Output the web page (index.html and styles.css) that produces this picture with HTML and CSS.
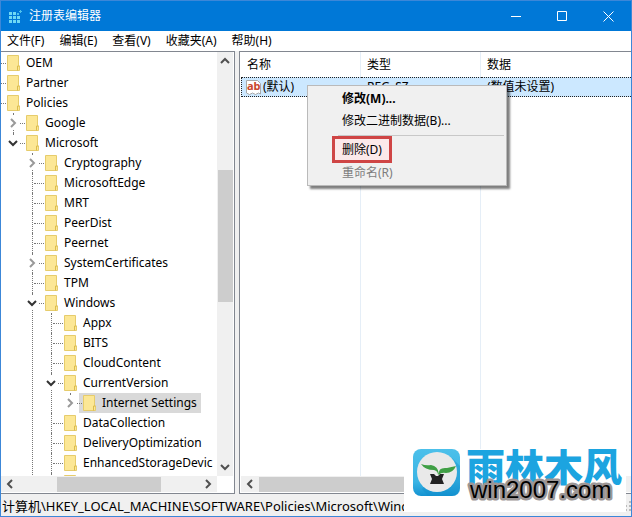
FILE: index.html
```
<!doctype html>
<html lang="zh-CN">
    <head>
        <meta charset="utf-8">
        <meta name="viewport" content="width=device-width, initial-scale=1.0">
        <title>注册表编辑器</title>
        <link rel="stylesheet" href="styles.css">
    </head>
    <body>
        <!-- shared icons -->
        <svg class="defs" width="0" height="0">
            <symbol id="folder" viewBox="0 0 13 16">
                <path d="M.5.5h11v10.500h1v4.500H.5z" fill="#fce795" stroke="#e6cc6c"/>
                <path d="M10.500 15.500v-4.500h2" fill="none" stroke="#dcbc4c"/>
            </symbol>
            <symbol id="chevron" viewBox="0 0 10 10">
                <path d="M3 1l4 4-4 4" fill="none" stroke="currentColor" stroke-width="2"/>
            </symbol>
        </svg>

        <div class="window">
            <header class="titlebar">
                <svg class="app-icon" viewBox="0 0 14 14">
                    <path d="M1 3h3v3H1zM5 3h3v3H5zM1 7h3v3H1zM5 7h3v3H5zM9 7h3v3H9zM1 11h3v3H1zM5 11h3v3H5zM9 11h3v3H9z" fill="#6fd8f4"/>
                    <path d="M9 4h2v2H9zM12 1h1v1h1v1h-1v1h-1V3h-1V2h1z" fill="#4fc0ec"/>
                </svg>
                <h1>注册表编辑器</h1>
                <button type="button" aria-label="最小化"><svg viewBox="0 0 11 11"><path d="M0 5.500h10"/></svg></button>
                <button type="button" aria-label="最大化"><svg viewBox="0 0 11 11"><path d="M.5.5h9v9h-9z"/></svg></button>
                <button type="button" aria-label="关闭"><svg viewBox="0 0 11 11"><path d="M.5.5l10 10M10.500.5l-10 10"/></svg></button>
            </header>

            <nav class="menubar">
                <button type="button">文件(F)</button>
                <button type="button">编辑(E)</button>
                <button type="button">查看(V)</button>
                <button type="button">收藏夹(A)</button>
                <button type="button">帮助(H)</button>
            </nav>

            <main class="panes">
                <section class="pane tree-pane">
                    <div class="tree-view">
                        <ul class="tree">
                            <li><div class="row"><svg class="folder"><use href="#folder"/></svg><span>OEM</span></div></li>
                            <li><div class="row"><svg class="folder"><use href="#folder"/></svg><span>Partner</span></div></li>
                            <li><div class="row"><svg class="folder"><use href="#folder"/></svg><span>Policies</span></div>
                                <ul>
                                    <li><div class="row"><button type="button" class="toggle" aria-label="Google"><svg><use href="#chevron"/></svg></button><svg class="folder"><use href="#folder"/></svg><span>Google</span></div></li>
                                    <li><div class="row"><button type="button" class="toggle open" aria-label="Microsoft"><svg><use href="#chevron"/></svg></button><svg class="folder"><use href="#folder"/></svg><span>Microsoft</span></div>
                                        <ul>
                                            <li><div class="row"><button type="button" class="toggle" aria-label="Cryptography"><svg><use href="#chevron"/></svg></button><svg class="folder"><use href="#folder"/></svg><span>Cryptography</span></div></li>
                                            <li><div class="row"><svg class="folder"><use href="#folder"/></svg><span>MicrosoftEdge</span></div></li>
                                            <li><div class="row"><svg class="folder"><use href="#folder"/></svg><span>MRT</span></div></li>
                                            <li><div class="row"><svg class="folder"><use href="#folder"/></svg><span>PeerDist</span></div></li>
                                            <li><div class="row"><svg class="folder"><use href="#folder"/></svg><span>Peernet</span></div></li>
                                            <li><div class="row"><button type="button" class="toggle" aria-label="SystemCertificates"><svg><use href="#chevron"/></svg></button><svg class="folder"><use href="#folder"/></svg><span>SystemCertificates</span></div></li>
                                            <li><div class="row"><svg class="folder"><use href="#folder"/></svg><span>TPM</span></div></li>
                                            <li class="more"><div class="row"><button type="button" class="toggle open" aria-label="Windows"><svg><use href="#chevron"/></svg></button><svg class="folder"><use href="#folder"/></svg><span>Windows</span></div>
                                                <ul>
                                                    <li><div class="row"><svg class="folder"><use href="#folder"/></svg><span>Appx</span></div></li>
                                                    <li><div class="row"><svg class="folder"><use href="#folder"/></svg><span>BITS</span></div></li>
                                                    <li><div class="row"><svg class="folder"><use href="#folder"/></svg><span>CloudContent</span></div></li>
                                                    <li><div class="row"><button type="button" class="toggle open" aria-label="CurrentVersion"><svg><use href="#chevron"/></svg></button><svg class="folder"><use href="#folder"/></svg><span>CurrentVersion</span></div>
                                                        <ul>
                                                            <li><div class="row selected"><button type="button" class="toggle" aria-label="Internet Settings"><svg><use href="#chevron"/></svg></button><svg class="folder"><use href="#folder"/></svg><span>Internet Settings</span></div></li>
                                                        </ul>
                                                    </li>
                                                    <li><div class="row"><svg class="folder"><use href="#folder"/></svg><span>DataCollection</span></div></li>
                                                    <li><div class="row"><svg class="folder"><use href="#folder"/></svg><span>DeliveryOptimization</span></div></li>
                                                    <li><div class="row"><svg class="folder"><use href="#folder"/></svg><span>EnhancedStorageDevic</span></div></li>
                                                    <li class="more"><div class="row"><svg class="folder"><use href="#folder"/></svg></div></li>
                                                </ul>
                                            </li>
                                        </ul>
                                    </li>
                                </ul>
                            </li>
                        </ul>
                    </div>
                    <div class="scroll-v">
                        <svg class="up"><use href="#chevron"/></svg>
                        <div class="track"><div class="thumb"></div></div>
                        <svg class="down"><use href="#chevron"/></svg>
                    </div>
                    <div class="scroll-h">
                        <svg class="left"><use href="#chevron"/></svg>
                        <div class="track"><div class="thumb"></div></div>
                        <svg><use href="#chevron"/></svg>
                    </div>
                </section>

                <section class="pane list-pane">
                    <div class="list-view">
                        <table>
                            <thead>
                                <tr><th>名称</th><th>类型</th><th>数据</th></tr>
                            </thead>
                            <tbody>
                                <tr>
                                    <td>
                                        <div class="value-name">
                                            <svg viewBox="0 0 15 15">
                                                <path d="M.5.5h11l3 3v10.500l-2-1-3 1.500-3-1.500-3 1.500-3-1.500z" fill="#fff" stroke="#a9a9a9"/>
                                                <text x="1" y="10">ab</text>
                                            </svg>
                                            <span>(默认)</span>
                                        </div>
                                    </td>
                                    <td>REG_SZ</td>
                                    <td>(数值未设置)</td>
                                </tr>
                            </tbody>
                        </table>
                    </div>
                    <div class="scroll-h">
                        <svg class="left"><use href="#chevron"/></svg>
                        <div class="track"><div class="thumb"></div></div>
                        <svg><use href="#chevron"/></svg>
                    </div>

                    <div class="context-menu">
                        <button type="button" class="default">修改(M)...</button>
                        <button type="button">修改二进制数据(B)...</button>
                        <hr>
                        <button type="button" class="marked">删除(D)</button>
                        <button type="button" disabled>重命名(R)</button>
                    </div>
                </section>
            </main>

            <footer class="statusbar">
                <span>计算机\HKEY_LOCAL_MACHINE\SOFTWARE\Policies\Microsoft\Windows\CurrentVersion\Internet Settings</span>
                <svg viewBox="0 0 10 10"><path d="M8 0h2v2H8zM4 4h2v2H4zM8 4h2v2H8zM0 8h2v2H0zM4 8h2v2H4zM8 8h2v2H8z"/></svg>
            </footer>
        </div>

        <div class="watermark">
            <svg viewBox="0 0 222 62">
                <defs>
                    <linearGradient id="tile" x1="0" y1="0" x2="0" y2="1">
                        <stop offset="0" stop-color="#4cc0ea"/>
                        <stop offset=".7" stop-color="#3ab4e4"/>
                        <stop offset="1" stop-color="#1493d2"/>
                    </linearGradient>
                </defs>
                <rect x="9" y="0" width="47" height="47" rx="8" fill="url(#tile)"/>
                <path d="M48 9l8 8v22q0 8-8 8H24L18 40z" fill="#0e8ccb" opacity=".4"/>
                <circle cx="33" cy="23" r="20" fill="#e9e9e9"/>
                <path d="M26 25h4l2 2h2l2-2h4l-2 5 2 5H26l2-5z" fill="#222"/>
                <path d="M34 26q0-4-4-5-9 0-13-6 5 2 10 1 7 1 8 9zM35 25q-1-7 8-6l9-2q-3 7-10 7-5-1-7 2z" fill="#3f9f45"/>
                <text class="brand" x="62" y="32">雨林木风</text>
                <text class="domain" x="66" y="49">win2007.com</text>
            </svg>
        </div>
    </body>
</html>
```
FILE: styles.css
```
html, body {
    margin: 0;
    padding: 0;
}
body {
    font-family: "Noto Sans", "Noto Sans CJK SC", sans-serif;
    font-size: 12px;
    line-height: 20px;
    color: #000;
}
button {
    margin: 0;
    padding: 0;
    border: 0;
    background: none;
    font: inherit;
    color: inherit;
}
.defs {
    position: absolute;
}
.window {
    display: flex;
    flex-direction: column;
    box-sizing: border-box;
    height: 100vh;
    overflow: hidden;
    border: solid 1px #3c87d8;
    background: #f0f0f0;
}


.titlebar {
    display: flex;
    flex: none;
    align-items: center;
    height: 30px;
    padding-left: 7px;
    background: #0078d7;
    color: #fff;
}
.titlebar h1 {
    flex: 1;
    margin: 0 0 0 7px;
    font-size: 12px;
    font-weight: normal;
}
.app-icon {
    width: 14px;
    height: 14px;
}
.titlebar button {
    display: flex;
    align-items: center;
    justify-content: center;
    width: 46px;
    height: 30px;
}
.titlebar button svg {
    width: 11px;
    height: 11px;
    fill: none;
    stroke: #fff;
}

.menubar {
    display: flex;
    flex: none;
    gap: 15px;
    height: 20px;
    padding-left: 6px;
    background: #fff;
}


.panes {
    display: flex;
    flex: 1;
    gap: 4px;
    min-height: 0;
}
.pane {
    display: grid;
    box-sizing: border-box;
    border: solid 1px #828790;
    background: #fff;
}
.tree-pane {
    flex: none;
    width: 234px;
    padding: 0 1px 1px 0;
    border-left: 0;
    grid-template: minmax(0, 1fr) 16px / minmax(0, 1fr) 16px;
}
.list-pane {
    position: relative;
    flex: 1;
    min-width: 0;
    padding: 0 0 1px 1px;
    border-right: 0;
    grid-template: minmax(0, 1fr) 16px / minmax(0, 1fr);
}

.tree-view, .list-view {
    overflow: hidden;
}
.tree, .tree ul {
    margin: 0;
    padding: 0;
    list-style: none;
}
.tree {
    margin-left: -13px;
    padding-top: 1px;
    white-space: nowrap;
}
.tree ul {
    padding-left: 19px;
}
.tree li {
    position: relative;
}
/* dotted guides */
.tree li::before {
    content: "";
    position: absolute;
    top: 0;
    bottom: 0;
    left: 6px;
    border-left: dotted 1px #777;
}
.tree li:last-child:not(.more)::before {
    bottom: auto;
    height: 10px;
}
.row {
    display: flex;
    align-items: center;
    position: relative;
    width: max-content;
    height: 20px;
    padding-left: 19px;
}
.row::before {
    content: "";
    position: absolute;
    top: 10px;
    left: 8px;
    width: 10px;
    border-top: dotted 1px #777;
}
.row span {
    padding: 0 4px 0 6px;
}
.folder {
    width: 13px;
    height: 16px;
}
.toggle {
    position: relative;
    display: flex;
    align-items: center;
    justify-content: center;
    width: 14px;
    height: 14px;
    margin: 0 6px 0 -20px;
    background: #fff;
    color: #999;
}
.toggle svg {
    width: 10px;
    height: 10px;
}
.toggle.open {
    color: #333;
}
.toggle.open svg {
    transform: rotate(90deg);
}
.selected {
    background: linear-gradient(#d9d9d9, #d9d9d9) 15px 0 no-repeat;
}


.scroll-v, .scroll-h {
    display: flex;
    align-items: center;
    justify-content: space-between;
    background: #f0f0f0;
    color: #505050;
}
.scroll-v {
    flex-direction: column;
}
.scroll-v svg, .scroll-h svg {
    flex: none;
    width: 10px;
    height: 10px;
    margin: 4px;
}
.track {
    display: flex;
    flex: 1;
}
.thumb {
    background: #cdcdcd;
}
.scroll-v .track {
    flex-direction: column;
    width: 15px;
}
.scroll-v .thumb {
    height: 34%;
    margin-top: 100px;
}
.scroll-h {
    grid-row: 2;
}
.scroll-h .track {
    height: 15px;
}
.tree-pane .scroll-h .thumb {
    width: 58%;
    margin-left: 38px;
}
.list-pane .scroll-h .thumb {
    width: 70%;
}
.up {
    transform: rotate(-90deg);
}
.down {
    transform: rotate(90deg);
}
.left {
    transform: rotate(180deg);
}


/* column lines run on below the rows */
.list-view {
    background:
        linear-gradient(#e5eef7, #e5eef7) 119px 0 / 1px 100% no-repeat,
        linear-gradient(#e5eef7, #e5eef7) 239px 0 / 1px 100% no-repeat;
}
table {
    width: 100%;
    border-collapse: separate;
    border-spacing: 0;
    table-layout: fixed;
}
th, td {
    padding: 0 0 0 6px;
    border-right: solid 1px #e5eef7;
    text-align: left;
    font-weight: normal;
    white-space: nowrap;
}
th:nth-child(-n+2) {
    width: 113px;
}
th:last-child, td:last-child {
    border-right: 0;
}
th {
    height: 25px;
}
td {
    height: 18px;
    line-height: 18px;
    border-top: dotted 1px #222;
    border-bottom: dotted 1px #222;
    border-right-color: #cce8ff;
    background: #cce8ff;
}
td:first-child {
    padding-left: 5px;
    border-left: dotted 1px #222;
}
.value-name {
    display: flex;
    align-items: center;
    gap: 2px;
}
.value-name svg {
    width: 15px;
    height: 15px;
    margin-left: -1px;
}
.value-name text {
    font-size: 11px;
    font-weight: bold;
    fill: #c8452c;
}

.context-menu {
    position: absolute;
    top: 33px;
    left: 67px;
    display: flex;
    flex-direction: column;
    box-sizing: border-box;
    width: 200px;
    padding: 2px;
    border: solid 1px #bababa;
    background: #f0f0f0;
    box-shadow: 3px 3px 2px rgba(0, 0, 0, .5);
}
.context-menu button {
    height: 22px;
    padding-left: 32px;
    text-align: left;
}
.context-menu .default {
    font-weight: bold;
}
.context-menu button:disabled {
    height: 20px;
    line-height: 18px;
    color: #7d7d7d;
}
.context-menu hr {
    align-self: stretch;
    margin: 3px 0 0 28px;
    border: 0;
    border-top: solid 1px #c8c8c8;
}
.context-menu .marked {
    display: flex;
    align-items: center;
    align-self: flex-start;
    width: 60px;
    height: 27px;
    margin-left: 22px;
    padding: 0 0 0 7px;
    border: solid 3px #cf4545;
    background: #fbe9ea;
}


.statusbar {
    display: flex;
    flex: none;
    align-items: center;
    box-sizing: border-box;
    height: 22px;
    padding: 2px 0 0 1px;
    overflow: hidden;
    font-size: 13px;
    white-space: nowrap;
}
.statusbar span {
    flex: 1;
    min-width: 0;
    overflow: hidden;
}
.statusbar svg {
    width: 10px;
    height: 10px;
    fill: #bbb;
}

.watermark {
    position: absolute;
    right: 6px;
    bottom: 5px;
    width: 222px;
    height: 63px;
    background: #fff;
}
.watermark svg {
    display: block;
    width: 222px;
    height: 62px;
}
.brand {
    font-size: 39px;
    font-weight: 900;
    fill: #1ca4e0;
}
.domain {
    font-family: "Liberation Sans", sans-serif;
    font-size: 24px;
    fill: #000;
    stroke: #9c9696;
    stroke-width: 5px;
    stroke-linejoin: round;
    paint-order: stroke;
}
```
